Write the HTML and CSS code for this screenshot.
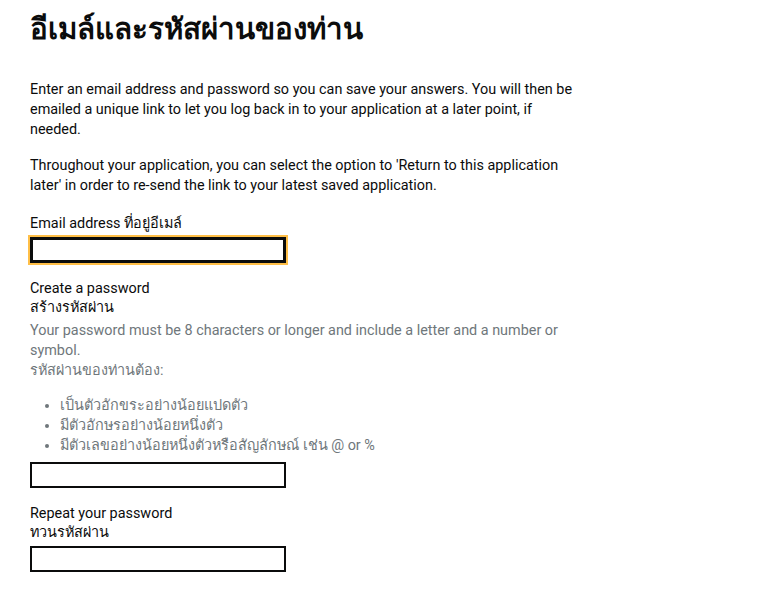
FILE: index.html
```html
<!DOCTYPE html>
<html lang="th">
<head>
  <meta charset="UTF-8">
  <meta name="viewport" content="width=device-width, initial-scale=1.0">
  <title>อีเมล์และรหัสผ่านของท่าน</title>
  <link rel="stylesheet" href="styles.css">
</head>
<body>
  <main class="page">
    <h1 class="heading">อีเมล์และรหัสผ่านของท่าน</h1>

    <p class="body-text">Enter an email address and password so you can save your answers. You will then be emailed a unique link to let you log back in to your application at a later point, if needed.</p>
    <p class="body-text intro-last">Throughout your application, you can select the option to 'Return to this application later' in order to re-send the link to your latest saved application.</p>

    <div class="form-group">
      <label class="label" for="email">Email address ที่อยู่อีเมล์</label>
      <input class="input input-focus" id="email" type="email">
    </div>

    <div class="form-group">
      <label class="label" for="password">Create a password<br><span class="label-thai">สร้างรหัสผ่าน</span></label>
      <div class="hint">
        Your password must be 8 characters or longer and include a letter and a number or symbol.<br>
        รหัสผ่านของท่านต้อง:
        <ul class="hint-list">
          <li>เป็นตัวอักขระอย่างน้อยแปดตัว</li>
          <li>มีตัวอักษรอย่างน้อยหนึ่งตัว</li>
          <li>มีตัวเลขอย่างน้อยหนึ่งตัวหรือสัญลักษณ์ เช่น @ or %</li>
        </ul>
      </div>
      <input class="input" id="password" type="password">
    </div>

    <div class="form-group">
      <label class="label" for="password-repeat">Repeat your password<br><span class="label-thai">ทวนรหัสผ่าน</span></label>
      <input class="input" id="password-repeat" type="password">
    </div>
  </main>
</body>
</html>
```

FILE: styles.css
```css
body {
  margin: 0;
  padding: 0;
  background-color: #fff;
  color: #0b0c0c;
  font-family: Roboto, "Noto Sans", "Liberation Sans", sans-serif;
}
.page {
  width: 545px;
  padding: 10px 30px;
}
.heading {
  font-size: 29.5px;
  line-height: 38px;
  font-weight: 700;
  margin: 0 0 32px;
}
.body-text {
  font-size: 14.4px;
  line-height: 20px;
  margin: 0 0 16px;
}
.intro-last {
  margin-bottom: 18px;
}
.form-group {
  margin-bottom: 16px;
}
.label {
  display: block;
  font-size: 14.4px;
  line-height: 19px;
  margin-bottom: 4px;
}
.label-thai {
  font-weight: 500;
}
.hint {
  font-size: 14.4px;
  line-height: 20px;
  color: #6f777b;
  margin-bottom: 6px;
}
.hint-list {
  margin: 15px 0 0;
  padding-left: 30px;
}
.input {
  display: block;
  box-sizing: border-box;
  width: 256px;
  height: 26px;
  margin: 0;
  padding: 2px 4px;
  border: 2px solid #0b0c0c;
  border-radius: 0;
  font-size: 14px;
  font-family: inherit;
  background: #fff;
}
.input-focus {
  outline: 2px solid #ffbf47;
  outline-offset: 0;
  box-shadow: inset 0 0 0 1px #0b0c0c;
}
```
